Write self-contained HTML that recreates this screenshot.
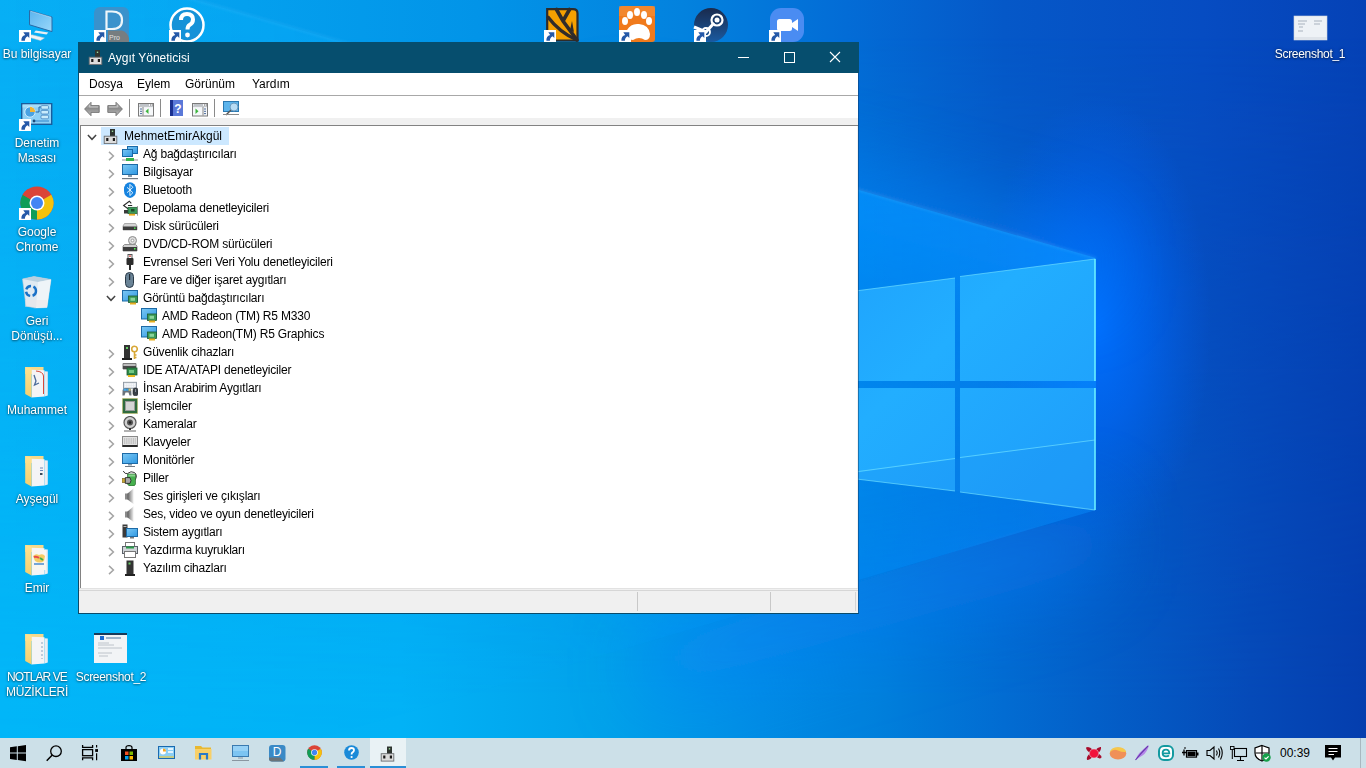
<!DOCTYPE html>
<html><head><meta charset="utf-8">
<style>
*{margin:0;padding:0;box-sizing:border-box}
html,body{width:1366px;height:768px;overflow:hidden}
body{position:relative;font-family:"Liberation Sans",sans-serif;font-size:12px;background:#0468cf}
#wall{position:absolute;left:0;top:0;width:1366px;height:738px;
 background:linear-gradient(80deg,#02b6f7 0px,#03a6ee 260px,#0398e8 470px,#037fdc 700px,#0468cf 880px,#0558c8 1000px,#0540b4 1300px)}
#wsvg{position:absolute;left:0;top:0}
.a{position:absolute}
svg.a{overflow:visible}
.di{position:absolute;color:#fff;font-size:12px;line-height:15px;text-align:center;white-space:nowrap;text-shadow:0 0 3px rgba(0,0,0,.5),0 1px 2px rgba(0,0,0,.4);transform:translateZ(0)}
.r{position:absolute;height:18px;line-height:18px;white-space:nowrap;color:#000;letter-spacing:-0.2px;transform:translateZ(0)}
.ch{position:absolute}
#task{position:absolute;left:0;top:738px;width:1366px;height:30px;background:#cce0e8}
</style></head>
<body>
<div id="wall"></div>
<svg id="wsvg" width="1366" height="738" viewBox="0 0 1366 738">
 <defs>
  <linearGradient id="btop" x1="0" y1="0" x2="1366" y2="0" gradientUnits="userSpaceOnUse">
   <stop offset="0" stop-color="#06aaf2"/><stop offset=".18" stop-color="#04a0ee"/><stop offset=".35" stop-color="#0294e8"/>
   <stop offset=".5" stop-color="#0382de"/><stop offset=".62" stop-color="#036cd6"/><stop offset=".735" stop-color="#0558c8"/>
   <stop offset=".88" stop-color="#064cc2"/><stop offset="1" stop-color="#0542b6"/>
  </linearGradient>
  <linearGradient id="bbot" x1="0" y1="0" x2="1366" y2="0" gradientUnits="userSpaceOnUse">
   <stop offset="0" stop-color="#02b6f8"/><stop offset=".294" stop-color="#02b2f6"/><stop offset=".442" stop-color="#02a2ea"/>
   <stop offset=".558" stop-color="#028ce4"/><stop offset=".64" stop-color="#0080dc"/><stop offset=".735" stop-color="#026cd2"/>
   <stop offset=".916" stop-color="#054ab8"/><stop offset="1" stop-color="#053eae"/>
  </linearGradient>
  <linearGradient id="vmask" x1="0" y1="0" x2="0" y2="738" gradientUnits="userSpaceOnUse">
   <stop offset="0.05" stop-color="#fff" stop-opacity="0"/><stop offset="0.95" stop-color="#fff" stop-opacity="1"/>
  </linearGradient>
  <mask id="vm"><rect x="0" y="0" width="1366" height="738" fill="url(#vmask)"/></mask>
  <linearGradient id="beam" x1="0" y1="0" x2="1096" y2="0" gradientUnits="userSpaceOnUse">
   <stop offset="0" stop-color="#0cc0ff" stop-opacity=".25"/>
   <stop offset=".5" stop-color="#08a8ff" stop-opacity=".35"/>
   <stop offset=".78" stop-color="#0094ff" stop-opacity=".9"/>
   <stop offset="1" stop-color="#0890ff" stop-opacity="1"/>
  </linearGradient>
  <linearGradient id="beamv" x1="0" y1="0" x2="0" y2="1">
   <stop offset="0" stop-color="#fff" stop-opacity="1"/><stop offset=".55" stop-color="#fff" stop-opacity=".55"/><stop offset="1" stop-color="#fff" stop-opacity=".0"/>
  </linearGradient>
  <mask id="bm"><polygon points="0,-56 1096,258 1096,510 0,832" fill="url(#beamv)"/></mask>
  <radialGradient id="glow" cx="1096" cy="325" r="115" gradientTransform="translate(1096 325) scale(1 2.0) translate(-1096 -325)" gradientUnits="userSpaceOnUse">
   <stop offset="0" stop-color="#0070ff" stop-opacity=".97"/>
   <stop offset=".45" stop-color="#0068fa" stop-opacity=".6"/>
   <stop offset="1" stop-color="#0060f0" stop-opacity="0"/>
  </radialGradient>
  <linearGradient id="pane" x1="858" y1="260" x2="1096" y2="510" gradientUnits="userSpaceOnUse">
   <stop offset="0" stop-color="#1fa4fd"/>
   <stop offset=".35" stop-color="#22aeff"/>
   <stop offset="1" stop-color="#1e9cfa"/>
  </linearGradient>
  <filter id="blur40" x="-50%" y="-50%" width="200%" height="200%"><feGaussianBlur stdDeviation="40"/></filter>
  <filter id="blur2" x="-10%" y="-10%" width="120%" height="120%"><feGaussianBlur stdDeviation="1.5"/></filter>
 </defs>
 <rect x="0" y="0" width="1366" height="738" fill="url(#btop)"/>
 <rect x="0" y="0" width="1366" height="738" fill="url(#bbot)" mask="url(#vm)"/>
 <rect x="0" y="0" width="1366" height="738" fill="url(#glow)"/>
 <polygon points="600,110 1096,240 1096,300 600,170" fill="#0a88ff" opacity=".6" filter="url(#blur40)"/>
 <polygon points="650,640 1100,500 1100,570 650,700" fill="#0a80ff" opacity=".5" filter="url(#blur40)"/>
 <rect x="0" y="-60" width="1100" height="900" fill="url(#beam)" mask="url(#bm)"/>
 <polyline points="0,-56 1096,258" fill="none" stroke="#50c0ff" stroke-opacity=".35" stroke-width="1.5" filter="url(#blur2)"/>
 <g fill="url(#pane)">
  <polygon points="840,293 955,278 955,381 840,381"/>
  <polygon points="960,276.5 1095,259 1095,381 960,381"/>
  <polygon points="840,388 955,388 955,491 840,477"/>
  <polygon points="960,388 1095,388 1095,510 960,492"/>
 </g>
 <polygon points="840,475 1095,440 1095,510 960,492 955,491 840,477" fill="#1a88f0" opacity=".2"/>
 <g fill="none" stroke="#6ef0ff" stroke-opacity=".95" stroke-width="1.6">
  <polyline points="1095,259 1095,381"/>
  <polyline points="1095,388 1095,510"/>
 </g>
 <g fill="none" stroke="#7ae8ff" stroke-opacity=".6" stroke-width="1.2">
  <polyline points="840,293 955,278"/><polyline points="960,276.5 1095,259"/>
  <polyline points="840,477 955,491"/><polyline points="960,492 1095,510"/>
  <polyline points="840,474 955,458.5"/><polyline points="960,457.5 1095,440"/>
 </g>
</svg>
<svg width="0" height="0" style="position:absolute">
<defs>
 <symbol id="sc" viewBox="0 0 12 12"><rect x="0" y="0" width="12" height="12" fill="#fff"/><path d="M2.4 10.8 C2.2 7.4 3.4 5.6 6.2 4.9 L4.3 2.2 H10.3 V7.9 L8.6 6.3 C6.9 7.1 5.9 8.4 5.9 10.8 Z" fill="#2458a8"/></symbol>
 <linearGradient id="fold" x1="0" y1="0" x2="0" y2="1"><stop offset="0" stop-color="#fde292"/><stop offset="1" stop-color="#f4cf6e"/></linearGradient>
 <symbol id="folder" viewBox="0 0 32 32"><path d="M3.2 1 H21.5 V8 H3.2 Z" fill="#f6d98a"/><path d="M9.5 3.8 L22.5 4.3 V30.5 L9.5 31.6 Z" fill="#f4f4f6"/><path d="M22.5 5.2 L25.8 5.6 V29.6 L22.5 30.4 Z" fill="#e8ecf2"/><path d="M3.2 1 L9.5 2.6 V31.6 L3.2 28 Z" fill="url(#fold)"/></symbol>
</defs></svg>
<!-- Bu bilgisayar -->
<svg class="a" style="left:20px;top:8px" width="36" height="34"><defs><linearGradient id="bbs" x1="0" y1="0" x2="1" y2="1"><stop offset="0" stop-color="#5ab4ee"/><stop offset="1" stop-color="#9ad8fa"/></linearGradient></defs><path d="M9.5 2.5 L32 9 V23.6 L9.5 16.8 Z" fill="url(#bbs)" stroke="#2a6aa6" stroke-width="1"/><path d="M10.5 3.2 L31 9.2" stroke="#d8f0ff" stroke-width=".8" opacity=".7"/><path d="M15.8 22.6 L28.3 24.6 L26.5 26.4 L14 24.4 Z" fill="#e8eef2"/><path d="M11.6 26.7 L24.4 29.9 L20.5 32.5 L9 29.3 Z" fill="#eef2f4" stroke="#c4ccd2" stroke-width=".5"/></svg>
<svg class="a" style="left:19px;top:30px" width="12" height="12"><use href="#sc"/></svg>
<div class="di" style="left:-1px;top:47px;width:76px">Bu bilgisayar</div>
<!-- D Pro -->
<svg class="a" style="left:94px;top:7px" width="36" height="36"><rect x="0" y="0" width="35" height="35" rx="6" fill="#3a92cc"/><path d="M14 23.5 H28 Q33 25 35 31 V35 H14 Z" fill="#777d80"/><path d="M12.5 4.5 H18 Q28 4.5 28 13.2 Q28 22 18 22 H12.5 Z" fill="none" stroke="#eef6fa" stroke-width="2.2"/><text x="15" y="33" font-family="Liberation Sans" font-size="7" fill="#e0e0e0">Pro</text></svg>
<svg class="a" style="left:94px;top:30px" width="12" height="12"><use href="#sc"/></svg>
<!-- help ? -->
<svg class="a" style="left:169px;top:7px" width="36" height="36"><circle cx="18" cy="18" r="16.5" fill="#1692d8" stroke="#fff" stroke-width="2.5"/><path d="M12 13 Q12 7 18 7 Q24 7 24 12.5 Q24 16 20.5 18 Q18.5 19.2 18.5 22.5" fill="none" stroke="#fff" stroke-width="4"/><circle cx="18.5" cy="28" r="2.4" fill="#fff"/></svg>
<svg class="a" style="left:169px;top:30px" width="12" height="12"><use href="#sc"/></svg>
<!-- orange tree -->
<svg class="a" style="left:546px;top:8px" width="33" height="34"><path d="M1.2 1.2 H27 Q31.5 1.2 31.5 5.5 V32.5 H1.2 Z" fill="#f5a000" stroke="#2e2c2a" stroke-width="2.2"/><path d="M31 32 L17 13 L10.5 1.5 M17 13 L23.5 1.5" fill="none" stroke="#302c2a" stroke-width="3.6" stroke-linecap="round"/><path d="M31 32 Q14 25 1.5 8.5" fill="none" stroke="#302c2a" stroke-width="3.4"/><path d="M24 22 L26 13 L28 24" fill="#302c2a"/><path d="M12 23 L30 32 H12 Z" fill="#302c2a" opacity=".0"/></svg>
<svg class="a" style="left:544px;top:30px" width="12" height="12"><use href="#sc"/></svg>
<!-- paw -->
<svg class="a" style="left:619px;top:6px" width="36" height="36"><rect x="0" y="0" width="36" height="36" rx="3" fill="#f07a1c"/><rect x="0" y="0" width="36" height="10" fill="#f59a4a" opacity=".4"/><ellipse cx="6" cy="15" rx="3" ry="4" fill="#fff"/><ellipse cx="11" cy="9" rx="3" ry="4" fill="#fff"/><ellipse cx="18" cy="6" rx="3" ry="4" fill="#fff"/><ellipse cx="25" cy="9" rx="3" ry="4" fill="#fff"/><ellipse cx="30" cy="15" rx="3" ry="4" fill="#fff"/><path d="M8 24 Q12 17 20 18 Q30 19 31 28 Q31 34 26 34 Q20 30 14 34 Q7 34 8 24 Z" fill="#fff"/></svg>
<svg class="a" style="left:619px;top:30px" width="12" height="12"><use href="#sc"/></svg>
<!-- steam -->
<svg class="a" style="left:694px;top:8px" width="35" height="34"><defs><linearGradient id="stg" x1="0" y1="0" x2="0" y2="1"><stop offset="0" stop-color="#1a2a4c"/><stop offset="1" stop-color="#1a5aa0"/></linearGradient></defs><circle cx="17" cy="17" r="17" fill="url(#stg)"/><circle cx="23" cy="12" r="5.5" fill="none" stroke="#fff" stroke-width="2.2"/><circle cx="23" cy="12" r="2.5" fill="#fff"/><path d="M0 19 L12 24 L20 15" fill="none" stroke="#fff" stroke-width="3"/><circle cx="12" cy="24" r="4" fill="none" stroke="#fff" stroke-width="1.8"/></svg>
<svg class="a" style="left:694px;top:30px" width="12" height="12"><use href="#sc"/></svg>
<!-- zoom -->
<svg class="a" style="left:770px;top:8px" width="34" height="34"><rect x="0" y="0" width="34" height="34" rx="11" fill="#4a8cf2"/><rect x="7" y="11" width="15" height="12" rx="2.5" fill="#fff"/><path d="M22 15 L28 11 V23 L22 19 Z" fill="#fff"/></svg>
<svg class="a" style="left:769px;top:30px" width="12" height="12"><use href="#sc"/></svg>
<!-- Screenshot_1 -->
<svg class="a" style="left:1294px;top:16px" width="34" height="25"><rect x="0" y="0" width="33" height="24" fill="#eef2f6"/><rect x="0" y="0" width="33" height="24" fill="none" stroke="#ccd4dc" stroke-width=".6"/><path d="M4 5 H13 M4 8 H11 M5 11 H9 M20 5 H28 M20 8 H26 M4 15 H9" stroke="#8a9aa8" stroke-width=".7"/><rect x="0" y="21" width="33" height="3" fill="#dfe4ea"/></svg>
<div class="di" style="left:1272px;top:47px;width:76px;letter-spacing:-0.3px">Screenshot_1</div>
<!-- Denetim Masasi -->
<svg class="a" style="left:21px;top:103px" width="32" height="23"><rect x="0.7" y="0.7" width="30" height="20.6" fill="#8ed0f6" stroke="#1a5c9c" stroke-width="1.4"/><rect x="1.5" y="1.5" width="28.5" height="3" fill="#b4e2fa" opacity=".7"/><circle cx="9" cy="9" r="5.2" fill="#4aa2e2" stroke="#d8f2ff" stroke-width=".9"/><path d="M9 9 V3.8 A5.2 5.2 0 0 1 14.2 9 Z" fill="#f2b534"/><path d="M14.5 9 H18 V4 H20" fill="none" stroke="#1a5c9c" stroke-width=".9"/><rect x="20" y="2.6" width="7.5" height="3.6" rx="1" fill="#c8ecfc" stroke="#3a7ab8" stroke-width=".7"/><rect x="20" y="7.4" width="7.5" height="3.6" rx="1" fill="#c8ecfc" stroke="#3a7ab8" stroke-width=".7"/><rect x="20" y="12.2" width="7.5" height="3.6" rx="1" fill="#c8ecfc" stroke="#3a7ab8" stroke-width=".7"/><path d="M12 18 H28" stroke="#4a9ad8" stroke-width="1.4"/><circle cx="13" cy="18" r="1.4" fill="#1a4a7a"/></svg>
<svg class="a" style="left:19px;top:119px" width="12" height="12"><use href="#sc"/></svg>
<div class="di" style="left:-1px;top:136px;width:76px">Denetim<br>Masası</div>
<!-- Chrome -->
<svg class="a" style="left:20px;top:186px" width="34" height="34" viewBox="0 0 34 34"><circle cx="17" cy="17" r="16.5" fill="#db4437"/><path d="M17 17 L31.3 8.75 A16.5 16.5 0 0 1 17 33.5 Z" fill="#f4c20d"/><path d="M17 17 L17 33.5 A16.5 16.5 0 0 1 2.7 8.75 Z" fill="#0f9d58"/><path d="M17 17 L2.7 8.75 A16.5 16.5 0 0 1 8 3 Z" fill="#db4437"/><circle cx="17" cy="17" r="7.5" fill="#fff"/><circle cx="17" cy="17" r="6" fill="#4285f4"/></svg>
<svg class="a" style="left:19px;top:208px" width="12" height="12"><use href="#sc"/></svg>
<div class="di" style="left:-1px;top:225px;width:76px">Google<br>Chrome</div>
<!-- Recycle bin -->
<svg class="a" style="left:22px;top:276px" width="30" height="33"><path d="M0.5 3 L12 0.5 L29 3.5 L25 31.5 L13 32 L4 30 Z" fill="#dfeaf2" stroke="#b8c8d4" stroke-width=".6"/><path d="M0.5 3 L12 0.5 L29 3.5 L16 6 Z" fill="#b8d0e0"/><path d="M16 6 L29 3.5 L25 31.5 L14 32 Z" fill="#eef4f8"/><circle cx="9" cy="15" r="5" fill="none" stroke="#1a72c8" stroke-width="2.4" stroke-dasharray="6 2.5"/><rect x="3" y="24" width="22" height="7" fill="#f0e4e4" opacity=".5"/></svg>
<div class="di" style="left:-1px;top:314px;width:76px">Geri<br>Dönüşü...</div>
<!-- folders -->
<svg class="a" style="left:22px;top:366px" width="32" height="32"><use href="#folder"/><path d="M12 9 L14 15 L12.5 19 L17 17" fill="none" stroke="#4a6a9a" stroke-width="1.3"/><path d="M14 5 Q21 5.5 21.5 10 V28" fill="none" stroke="#d84a3a" stroke-width="1"/></svg>
<div class="di" style="left:-1px;top:403px;width:76px">Muhammet</div>
<svg class="a" style="left:22px;top:455px" width="32" height="32"><use href="#folder"/><path d="M18 13 H21 M18 15.5 H21" stroke="#6a88b8" stroke-width="1"/><rect x="18" y="18" width="2.5" height="2" fill="#3a4a5a"/></svg>
<div class="di" style="left:-1px;top:492px;width:76px">Ayşegül</div>
<svg class="a" style="left:22px;top:544px" width="32" height="32"><use href="#folder"/><rect x="10" y="6" width="14" height="20" fill="#f8f6f0"/><path d="M11 12 Q14 9 17 11 Q21 9 23 12 L22 17 Q18 20 13 17 Z" fill="#f2c040" opacity=".8"/><path d="M12 13 Q15 12 17 14" stroke="#e84a4a" stroke-width="2" fill="none"/><path d="M18 14 L21 16" stroke="#3ab04a" stroke-width="2"/><path d="M12 20 H22" stroke="#4a8ad0" stroke-width="1.5"/></svg>
<div class="di" style="left:-1px;top:581px;width:76px">Emir</div>
<svg class="a" style="left:22px;top:633px" width="32" height="32"><use href="#folder"/><path d="M20 9 V26" stroke="#9ab0c8" stroke-width="1.2" stroke-dasharray="2 2"/></svg>
<div class="di" style="left:-1px;top:670px;width:76px"><span style="letter-spacing:-0.9px">NOTLAR VE</span><br><span style="letter-spacing:-0.2px">MÜZİKLERİ</span></div>
<!-- Screenshot_2 -->
<svg class="a" style="left:94px;top:633px" width="34" height="30"><rect x="0" y="0" width="33" height="30" fill="#f2f4f6"/><rect x="0" y="0" width="33" height="2" fill="#1a3a58"/><rect x="6" y="3" width="4" height="4" fill="#1a6ad0"/><path d="M12 5 H27" stroke="#6a8ab0" stroke-width="1.2"/><path d="M4 10 H15 M4 12 H20 M4 15 H28 M4 20 H18 M5 23 H14" stroke="#b0b8c0" stroke-width=".8"/></svg>
<div class="di" style="left:73px;top:670px;width:76px;letter-spacing:-0.3px">Screenshot_2</div>
<svg width="0" height="0" style="position:absolute">
<defs>
 <linearGradient id="gmon" x1="0" y1="0" x2="1" y2="1"><stop offset="0" stop-color="#7cc8f4"/><stop offset="1" stop-color="#2f98e2"/></linearGradient>
 <linearGradient id="garr" x1="0" y1="0" x2="0" y2="1"><stop offset="0" stop-color="#d0d0d0"/><stop offset=".45" stop-color="#8a8a8a"/><stop offset="1" stop-color="#c0c0c0"/></linearGradient>
 <symbol id="i-dm" viewBox="0 0 16 16"><rect x="7" y="1" width="5" height="7.5" fill="#2e3430"/><rect x="8.8" y="2.6" width="1.4" height="1.4" fill="#9ad89a"/><rect x="1.2" y="8.2" width="12.6" height="7.4" fill="#dcdcdc" stroke="#6a6e72" stroke-width=".9"/><rect x="3.2" y="10" width="2.2" height="3" fill="#1a1a1a"/><rect x="9.8" y="10" width="2.2" height="3" fill="#1a1a1a"/></symbol>
 <symbol id="i-net" viewBox="0 0 16 16"><rect x="5.5" y="0.5" width="10" height="7" fill="url(#gmon)" stroke="#1a6aa8"/><rect x="0.5" y="3.5" width="10" height="7" fill="url(#gmon)" stroke="#1a6aa8"/><rect x="0" y="13" width="16" height="2" fill="#c8c8c8"/><rect x="4" y="12" width="8" height="3" fill="#36b44a"/></symbol>
 <symbol id="i-pc" viewBox="0 0 16 16"><rect x="0.5" y="0.5" width="15" height="10" fill="url(#gmon)" stroke="#1d6aa6"/><rect x="6" y="11" width="4" height="2" fill="#8a9aa8"/><rect x="0" y="14" width="16" height="1.2" fill="#707a84"/></symbol>
 <symbol id="i-bt" viewBox="0 0 16 16"><rect x="2" y="0.3" width="12" height="15.6" rx="6" ry="7" fill="#1683e0"/><path d="M5 5.3 L10.9 10.7 L7.9 13.6 V2.3 L10.9 5.3 L5 10.7" fill="none" stroke="#e8f8ff" stroke-width=".95"/></symbol>
 <symbol id="i-sto" viewBox="0 0 16 16"><path d="M9.3 3.3 L7.3 1.2 L1.6 5.5 L7.3 9.8 L9.3 7.7 M6 5.5 H10.2" fill="none" stroke="#2a2a2a" stroke-width="1.1"/><rect x="2" y="10" width="4.5" height="3.5" fill="#3a3a3a"/><rect x="6" y="7.3" width="9.3" height="6.4" fill="#3a9a5a" stroke="#1e5a32" stroke-width=".7"/><rect x="9" y="9" width="3.5" height="2.5" fill="#1e4a2a"/><rect x="7" y="13.8" width="6" height="1.8" fill="#e8a820"/><rect x="15.2" y="6" width=".9" height="9.7" fill="#8a8a8a"/></symbol>
 <symbol id="i-disk" viewBox="0 0 16 16"><path d="M2.5 5.5 H13.5 L15 8 V12 H1 V8 Z" fill="#d4d4d4" stroke="#9a9a9a" stroke-width=".8"/><rect x="1" y="8.5" width="14" height="3.5" fill="#3e3e3e"/><rect x="12" y="9.5" width="1.5" height="1.3" fill="#5f5"/></symbol>
 <symbol id="i-dvd" viewBox="0 0 16 16"><circle cx="10.5" cy="4.5" r="4" fill="#dcdcdc" stroke="#8a8a8a"/><circle cx="10.5" cy="4.5" r="1.3" fill="#fff" stroke="#777" stroke-width=".6"/><path d="M2.5 8.5 H13.5 L15 10 V15 H1 V10 Z" fill="#cfcfcf" stroke="#909090"/><rect x="1" y="11" width="14" height="4" fill="#3e3e3e"/><rect x="12" y="12" width="1.5" height="1.5" fill="#5f5"/></symbol>
 <symbol id="i-usb" viewBox="0 0 16 16"><rect x="6" y="0.5" width="4" height="4" fill="#fff" stroke="#555"/><rect x="7" y="1.5" width="2" height="1.2" fill="#c33"/><rect x="4.5" y="4" width="7" height="7" rx="1" fill="#2c2c2c"/><rect x="7" y="11" width="2" height="5" fill="#2c2c2c"/></symbol>
 <symbol id="i-mouse" viewBox="0 0 16 16"><rect x="3.5" y="0.5" width="8" height="15" rx="4" fill="#6a8396" stroke="#2a3a48"/><rect x="7" y="2" width="1.2" height="6" fill="#1e2a34"/></symbol>
 <symbol id="i-disp" viewBox="0 0 16 16"><rect x="0.5" y="0.5" width="15" height="10.5" fill="url(#gmon)" stroke="#1d6aa6"/><rect x="6.5" y="6" width="9" height="6.5" fill="#3a9a58" stroke="#1e5a32" stroke-width=".8"/><rect x="8.5" y="7.8" width="4.5" height="3" fill="#8ad49a"/><rect x="8" y="12.5" width="6" height="2" fill="#e8b020"/></symbol>
 <symbol id="i-sec" viewBox="0 0 16 16"><rect x="2" y="1" width="6" height="13" fill="#333"/><rect x="4" y="3" width="2" height="2" fill="#6c6"/><rect x="0" y="14" width="10" height="2" fill="#222"/><circle cx="12.5" cy="5" r="2.8" fill="none" stroke="#d8a838" stroke-width="1.6"/><path d="M12.5 8 V15 M12.5 11 H14.5 M12.5 13.5 H14.5" stroke="#d8a838" stroke-width="1.6"/></symbol>
 <symbol id="i-ide" viewBox="0 0 16 16"><path d="M1 1.5 H14 V7 H1 Z" fill="#bdbdbd" stroke="#7a7a7a"/><rect x="1" y="4" width="13" height="3" fill="#4a4a4a"/><rect x="5" y="6" width="10" height="7" fill="#2f8a4a" stroke="#1c5a2e" stroke-width=".8"/><rect x="7" y="8" width="5" height="3" fill="#73c884"/><rect x="6" y="13" width="7" height="2" fill="#e6b820"/></symbol>
 <symbol id="i-hid" viewBox="0 0 16 16"><rect x="1.5" y="2.3" width="13" height="6" fill="#e4e8ee" stroke="#8c96a0" stroke-width=".9"/><path d="M3 4.2 H13 M3 6.2 H13" stroke="#fff" stroke-width="1" stroke-dasharray="1.4 .8"/><path d="M0.6 10 Q1 8 3.5 8 H7 Q9 8 9.2 10 L9.5 15.5 H7.5 L6.5 12.5 H3.5 L2.5 15.5 H0.4 Z" fill="#6a727a"/><rect x="1.5" y="8.6" width="2.5" height="2.2" fill="#4aa8e8"/><rect x="4.2" y="8.6" width="2.3" height="2.2" fill="#38a0e0"/><rect x="6.6" y="8.6" width="2" height="2.2" fill="#c8c070"/><rect x="11" y="8" width="5" height="7.8" rx="2.2" fill="#3a4048" stroke="#1a1e22" stroke-width=".6"/><path d="M13.5 9 V12" stroke="#9aa4ae" stroke-width=".8"/></symbol>
 <symbol id="i-cpu" viewBox="0 0 16 16"><rect x="0.5" y="0.5" width="15" height="15" fill="#2f6a3e" stroke="#c8c060" stroke-dasharray="1 1"/><rect x="3.5" y="3.5" width="9" height="9" fill="#d4d4d4" stroke="#9a9a9a"/></symbol>
 <symbol id="i-cam" viewBox="0 0 16 16"><circle cx="8" cy="6.5" r="6" fill="#cfcfcf" stroke="#555" stroke-width="1.2"/><circle cx="8" cy="6.5" r="3" fill="#555"/><circle cx="8" cy="6.5" r="1.3" fill="#222"/><rect x="7" y="12" width="2" height="2" fill="#333"/><rect x="2" y="14.5" width="12" height="1" fill="#666"/></symbol>
 <symbol id="i-kbd" viewBox="0 0 16 16"><rect x="0.5" y="2.5" width="15" height="10" fill="#e2e2e2" stroke="#8a8a8a"/><path d="M2 5 H14 M2 7 H14 M2 9 H14" stroke="#9a9a9a" stroke-width=".9" stroke-dasharray="1 .8"/><rect x="0.5" y="11" width="15" height="2" fill="#2a2a2a"/></symbol>
 <symbol id="i-mon" viewBox="0 0 16 16"><rect x="0.5" y="1.5" width="15" height="10" fill="url(#gmon)" stroke="#1d6aa6"/><rect x="6" y="12" width="4" height="1.5" fill="#8a9aa8"/><rect x="3" y="14" width="10" height="1" fill="#707a84"/></symbol>
 <symbol id="i-bat" viewBox="0 0 16 16"><path d="M1.2 1 Q3 4.5 5.5 3.5 Q9 0.5 12.5 2.5 Q16 5.5 13 10" fill="none" stroke="#3a3a3a" stroke-width="1"/><path d="M5.5 4 H13.5 V14 Q13.5 16 9.5 16 Q6 16 5.5 14 Z" fill="#46b04e" stroke="#1e5a22" stroke-width=".6"/><rect x="6.5" y="4.5" width="6.5" height="2" fill="#b8e8b8" opacity=".6"/><rect x="0" y="8.3" width="3.3" height="4.4" fill="#c8a838" stroke="#5a4a18" stroke-width=".5"/><path d="M3.3 7.6 H8 Q10 10.5 8 13.4 H3.3 Z" fill="#a8a8a8" stroke="#1a1a1a" stroke-width=".8"/></symbol>
 <linearGradient id="gspk" x1="0" y1="0" x2="1" y2="0"><stop offset="0" stop-color="#5a5a5a"/><stop offset=".6" stop-color="#b8b8b8"/><stop offset="1" stop-color="#e8e8e8"/></linearGradient><symbol id="i-spk" viewBox="0 0 16 16"><rect x="3" y="5.5" width="3" height="6" fill="#8a8a8a"/><path d="M5.5 5.5 L11.5 0.5 V16 L5.5 11.5 Z" fill="url(#gspk)"/><path d="M11.5 0.5 V16" stroke="#f4f4f4" stroke-width="1.2"/></symbol>
 <symbol id="i-sys" viewBox="0 0 16 16"><rect x="0.5" y="0.5" width="5" height="13" fill="#3a3a3a"/><rect x="1.5" y="2" width="3" height="1" fill="#bbb"/><rect x="4.5" y="4.5" width="11" height="8" fill="url(#gmon)" stroke="#1d6aa6"/><rect x="8" y="13" width="4" height="1.5" fill="#777"/></symbol>
 <symbol id="i-prn" viewBox="0 0 16 16"><rect x="3.5" y="0.5" width="9" height="4" fill="#fff" stroke="#777"/><rect x="0.5" y="4.5" width="15" height="7" fill="#cfd4d8" stroke="#5a6068"/><rect x="4" y="4.5" width="8" height="2" fill="#2a9a4a"/><rect x="2.5" y="9.5" width="11" height="6" fill="#fff" stroke="#777"/></symbol>
 <symbol id="i-sw" viewBox="0 0 16 16"><rect x="4.5" y="0.5" width="7" height="14" fill="#333"/><rect x="6.5" y="2.5" width="2" height="2" fill="#6c6"/><rect x="3" y="14" width="10" height="2" fill="#222"/></symbol>
 <symbol id="chr" viewBox="0 0 7 10"><path d="M1 0.9 L5.4 5 L1 9.1" fill="none" stroke="#a4a4a4" stroke-width="1.5"/></symbol>
 <symbol id="chd" viewBox="0 0 10 7"><path d="M0.9 1 L5 5.3 L9.1 1" fill="none" stroke="#444" stroke-width="1.5"/></symbol>
</defs></svg>

<!-- window frame -->
<div class="a" style="left:78px;top:42px;width:781px;height:572px;background:#f0f0f0;background-clip:padding-box;border:1px solid #0c4a68;border-right-color:rgba(10,50,90,.45)"></div><div class="a" style="left:855px;top:592px;width:1px;height:19px;background:#d4d4d4"></div>
<div class="a" style="left:78px;top:42px;width:781px;height:31px;background:#064e6e"></div>
<svg class="a" style="left:88px;top:49px" width="14" height="16"><use href="#i-dm" width="16" height="16"/></svg>
<div class="a" style="left:108px;top:51px;color:#fff;line-height:15px;transform:translateZ(0)">Aygıt Yöneticisi</div>
<svg class="a" style="left:737px;top:51px" width="14" height="12"><path d="M1 6.5 H12" stroke="#fff" stroke-width="1"/></svg>
<svg class="a" style="left:783px;top:51px" width="12" height="12"><rect x="1.5" y="1.5" width="10" height="10" fill="none" stroke="#fff" stroke-width="1"/></svg>
<svg class="a" style="left:829px;top:51px" width="12" height="12"><path d="M1 1 L11 11 M11 1 L1 11" stroke="#fff" stroke-width="1.1"/></svg>
<!-- menu -->
<div class="a" style="left:79px;top:73px;width:779px;height:22px;background:#fff"></div>
<div class="a" style="left:79px;top:95px;width:779px;height:1px;background:#a8a8a8"></div>
<div class="a" style="left:89px;top:77px;line-height:15px;transform:translateZ(0)">Dosya</div>
<div class="a" style="left:137px;top:77px;line-height:15px;transform:translateZ(0)">Eylem</div>
<div class="a" style="left:185px;top:77px;line-height:15px;transform:translateZ(0)">Görünüm</div>
<div class="a" style="left:252px;top:77px;line-height:15px;transform:translateZ(0)">Yardım</div>
<!-- toolbar -->
<div class="a" style="left:79px;top:96px;width:779px;height:22px;background:#fff"></div>
<svg class="a" style="left:84px;top:101px" width="16" height="16"><path d="M0.6 8 L7 1.3 V4.6 H15.2 V11.4 H7 V14.7 Z" fill="url(#garr)" stroke="#707070" stroke-width=".9"/><path d="M2 8 L6 3.8 V5.6 H14 V6.4 H5.2 V4.8 Z" fill="#e8e8e8" opacity=".6"/></svg>
<svg class="a" style="left:107px;top:101px" width="16" height="16"><path d="M15.4 8 L9 1.3 V4.6 H0.8 V11.4 H9 V14.7 Z" fill="url(#garr)" stroke="#707070" stroke-width=".9"/><path d="M14 8 L10 3.8 V5.6 H2 V6.4 H10.8 V4.8 Z" fill="#e8e8e8" opacity=".6"/></svg>
<div class="a" style="left:129px;top:99px;width:1px;height:18px;background:#8a8a8a"></div>
<svg class="a" style="left:138px;top:103px" width="16" height="14"><rect x="0.5" y="0.5" width="15" height="12.5" fill="#f6f8fa" stroke="#7a7a7a"/><path d="M1.5 2 H11" stroke="#9aa0a6" stroke-width="1.2"/><rect x="12" y="1.4" width="1.2" height="1.2" fill="#7a7a7a"/><rect x="13.8" y="1.4" width="1.2" height="1.2" fill="#7a7a7a"/><path d="M1 3.6 H15" stroke="#b0b4b8" stroke-width=".8"/><path d="M5 4 V12.5" stroke="#7a7a7a" stroke-width=".9"/><path d="M2 6 H4 M2 8.3 H4 M2 10.6 H4" stroke="#4a6a9a" stroke-width="1"/><path d="M10.5 5.5 L7.5 8.2 L10.5 11 Z" fill="#3cb43c"/></svg>
<div class="a" style="left:160px;top:99px;width:1px;height:18px;background:#8a8a8a"></div>
<svg class="a" style="left:170px;top:100px" width="14" height="16"><rect x="0" y="0" width="13" height="16" fill="#3552c0"/><rect x="0" y="0" width="3" height="16" fill="#1a3090"/><rect x="3" y="0" width="10" height="16" fill="#5a78d8"/><text x="8" y="12.5" fill="#fff" font-size="12" font-weight="bold" text-anchor="middle" font-family="Liberation Sans">?</text></svg>
<svg class="a" style="left:192px;top:103px" width="16" height="14"><rect x="0.5" y="0.5" width="15" height="12.5" fill="#f6f8fa" stroke="#7a7a7a"/><path d="M1.5 2 H11" stroke="#9aa0a6" stroke-width="1.2"/><rect x="12" y="1.4" width="1.2" height="1.2" fill="#7a7a7a"/><rect x="13.8" y="1.4" width="1.2" height="1.2" fill="#7a7a7a"/><path d="M1 3.6 H15" stroke="#b0b4b8" stroke-width=".8"/><path d="M11 4 V12.5" stroke="#7a7a7a" stroke-width=".9"/><path d="M12 6 H14 M12 8.3 H14 M12 10.6 H14" stroke="#4a6a9a" stroke-width="1"/><path d="M3.5 5.5 L6.5 8.2 L3.5 11 Z" fill="#3cb43c"/></svg>
<div class="a" style="left:214px;top:99px;width:1px;height:18px;background:#8a8a8a"></div>
<svg class="a" style="left:223px;top:101px" width="16" height="15"><rect x="0.5" y="0.5" width="15" height="10" fill="#5cb4ec" stroke="#2a78b0"/><circle cx="11" cy="6" r="4" fill="#b8dcf4" stroke="#6a9ac0"/><path d="M8 9 L3 14" stroke="#555" stroke-width="1.5"/><rect x="0" y="13" width="16" height="1" fill="#8a8a8a"/></svg>
<!-- tree -->
<div class="a" style="left:80px;top:125px;width:778px;height:1px;background:#828282"></div>
<div class="a" style="left:80px;top:125px;width:1px;height:463px;background:#828282"></div>
<div class="a" style="left:81px;top:126px;width:776px;height:462px;background:#fff"></div>
<div class="a" style="left:79px;top:588px;width:779px;height:1px;background:#e2e2e2"></div>
<div class="a" style="left:79px;top:590px;width:779px;height:1px;background:#d6d6d6"></div>
<div class="a" style="left:79px;top:612px;width:779px;height:1px;background:#e6f6fa"></div>
<div class="a" style="left:637px;top:592px;width:1px;height:19px;background:#c8c8c8"></div>
<div class="a" style="left:770px;top:592px;width:1px;height:19px;background:#c8c8c8"></div>
<div class="a" style="left:101px;top:127px;width:128px;height:18px;background:#cce8ff"></div>
<svg class="a" style="left:87px;top:134px" width="10" height="7"><use href="#chd"/></svg>
<svg class="a" style="left:103px;top:128px" width="16" height="16"><use href="#i-dm"/></svg>
<div class="r" style="left:124px;top:127px;letter-spacing:0">MehmetEmirAkgül</div>
<svg class="a" style="left:108px;top:151px" width="7" height="10"><use href="#chr"/></svg>
<svg class="a" style="left:122px;top:146px" width="16" height="16"><use href="#i-net"/></svg>
<div class="r" style="left:143px;top:145px">Ağ bağdaştırıcıları</div>
<svg class="a" style="left:108px;top:169px" width="7" height="10"><use href="#chr"/></svg>
<svg class="a" style="left:122px;top:164px" width="16" height="16"><use href="#i-pc"/></svg>
<div class="r" style="left:143px;top:163px">Bilgisayar</div>
<svg class="a" style="left:108px;top:187px" width="7" height="10"><use href="#chr"/></svg>
<svg class="a" style="left:122px;top:182px" width="16" height="16"><use href="#i-bt"/></svg>
<div class="r" style="left:143px;top:181px">Bluetooth</div>
<svg class="a" style="left:108px;top:205px" width="7" height="10"><use href="#chr"/></svg>
<svg class="a" style="left:122px;top:200px" width="16" height="16"><use href="#i-sto"/></svg>
<div class="r" style="left:143px;top:199px">Depolama denetleyicileri</div>
<svg class="a" style="left:108px;top:223px" width="7" height="10"><use href="#chr"/></svg>
<svg class="a" style="left:122px;top:218px" width="16" height="16"><use href="#i-disk"/></svg>
<div class="r" style="left:143px;top:217px">Disk sürücüleri</div>
<svg class="a" style="left:108px;top:241px" width="7" height="10"><use href="#chr"/></svg>
<svg class="a" style="left:122px;top:236px" width="16" height="16"><use href="#i-dvd"/></svg>
<div class="r" style="left:143px;top:235px">DVD/CD-ROM sürücüleri</div>
<svg class="a" style="left:108px;top:259px" width="7" height="10"><use href="#chr"/></svg>
<svg class="a" style="left:122px;top:254px" width="16" height="16"><use href="#i-usb"/></svg>
<div class="r" style="left:143px;top:253px">Evrensel Seri Veri Yolu denetleyicileri</div>
<svg class="a" style="left:108px;top:277px" width="7" height="10"><use href="#chr"/></svg>
<svg class="a" style="left:122px;top:272px" width="16" height="16"><use href="#i-mouse"/></svg>
<div class="r" style="left:143px;top:271px">Fare ve diğer işaret aygıtları</div>
<svg class="a" style="left:106px;top:295px" width="10" height="7"><use href="#chd"/></svg>
<svg class="a" style="left:122px;top:290px" width="16" height="16"><use href="#i-disp"/></svg>
<div class="r" style="left:143px;top:289px">Görüntü bağdaştırıcıları</div>
<svg class="a" style="left:141px;top:308px" width="16" height="16"><use href="#i-disp"/></svg>
<div class="r" style="left:162px;top:307px">AMD Radeon (TM) R5 M330</div>
<svg class="a" style="left:141px;top:326px" width="16" height="16"><use href="#i-disp"/></svg>
<div class="r" style="left:162px;top:325px">AMD Radeon(TM) R5 Graphics</div>
<svg class="a" style="left:108px;top:349px" width="7" height="10"><use href="#chr"/></svg>
<svg class="a" style="left:122px;top:344px" width="16" height="16"><use href="#i-sec"/></svg>
<div class="r" style="left:143px;top:343px">Güvenlik cihazları</div>
<svg class="a" style="left:108px;top:367px" width="7" height="10"><use href="#chr"/></svg>
<svg class="a" style="left:122px;top:362px" width="16" height="16"><use href="#i-ide"/></svg>
<div class="r" style="left:143px;top:361px">IDE ATA/ATAPI denetleyiciler</div>
<svg class="a" style="left:108px;top:385px" width="7" height="10"><use href="#chr"/></svg>
<svg class="a" style="left:122px;top:380px" width="16" height="16"><use href="#i-hid"/></svg>
<div class="r" style="left:143px;top:379px">İnsan Arabirim Aygıtları</div>
<svg class="a" style="left:108px;top:403px" width="7" height="10"><use href="#chr"/></svg>
<svg class="a" style="left:122px;top:398px" width="16" height="16"><use href="#i-cpu"/></svg>
<div class="r" style="left:143px;top:397px">İşlemciler</div>
<svg class="a" style="left:108px;top:421px" width="7" height="10"><use href="#chr"/></svg>
<svg class="a" style="left:122px;top:416px" width="16" height="16"><use href="#i-cam"/></svg>
<div class="r" style="left:143px;top:415px">Kameralar</div>
<svg class="a" style="left:108px;top:439px" width="7" height="10"><use href="#chr"/></svg>
<svg class="a" style="left:122px;top:434px" width="16" height="16"><use href="#i-kbd"/></svg>
<div class="r" style="left:143px;top:433px">Klavyeler</div>
<svg class="a" style="left:108px;top:457px" width="7" height="10"><use href="#chr"/></svg>
<svg class="a" style="left:122px;top:452px" width="16" height="16"><use href="#i-mon"/></svg>
<div class="r" style="left:143px;top:451px">Monitörler</div>
<svg class="a" style="left:108px;top:475px" width="7" height="10"><use href="#chr"/></svg>
<svg class="a" style="left:122px;top:470px" width="16" height="16"><use href="#i-bat"/></svg>
<div class="r" style="left:143px;top:469px">Piller</div>
<svg class="a" style="left:108px;top:493px" width="7" height="10"><use href="#chr"/></svg>
<svg class="a" style="left:122px;top:488px" width="16" height="16"><use href="#i-spk"/></svg>
<div class="r" style="left:143px;top:487px">Ses girişleri ve çıkışları</div>
<svg class="a" style="left:108px;top:511px" width="7" height="10"><use href="#chr"/></svg>
<svg class="a" style="left:122px;top:506px" width="16" height="16"><use href="#i-spk"/></svg>
<div class="r" style="left:143px;top:505px">Ses, video ve oyun denetleyicileri</div>
<svg class="a" style="left:108px;top:529px" width="7" height="10"><use href="#chr"/></svg>
<svg class="a" style="left:122px;top:524px" width="16" height="16"><use href="#i-sys"/></svg>
<div class="r" style="left:143px;top:523px">Sistem aygıtları</div>
<svg class="a" style="left:108px;top:547px" width="7" height="10"><use href="#chr"/></svg>
<svg class="a" style="left:122px;top:542px" width="16" height="16"><use href="#i-prn"/></svg>
<div class="r" style="left:143px;top:541px">Yazdırma kuyrukları</div>
<svg class="a" style="left:108px;top:565px" width="7" height="10"><use href="#chr"/></svg>
<svg class="a" style="left:122px;top:560px" width="16" height="16"><use href="#i-sw"/></svg>
<div class="r" style="left:143px;top:559px">Yazılım cihazları</div>
<div id="task"></div>
<div class="a" style="left:370px;top:738px;width:36px;height:30px;background:#e9f2f5"></div>
<div class="a" style="left:300px;top:766px;width:28px;height:2px;background:#2a8fd6"></div>
<div class="a" style="left:337px;top:766px;width:28px;height:2px;background:#2a8fd6"></div>
<div class="a" style="left:370px;top:766px;width:36px;height:2px;background:#2a8fd6"></div>
<!-- start -->
<svg class="a" style="left:10px;top:745px" width="17" height="17"><path d="M0 2.3 L6.8 1.3 V7.6 H0 Z M7.8 1.2 L16 0 V7.6 H7.8 Z M0 8.6 H6.8 V14.9 L0 13.9 Z M7.8 8.6 H16 V16.2 L7.8 15 Z" fill="#000"/></svg>
<!-- search -->
<svg class="a" style="left:46px;top:745px" width="17" height="17"><circle cx="10" cy="6.2" r="5.3" fill="none" stroke="#000" stroke-width="1.3"/><path d="M6.3 10 L0.7 15.8" stroke="#000" stroke-width="1.5"/></svg>
<!-- task view -->
<svg class="a" style="left:81px;top:744px" width="18" height="18"><path d="M1.6 1 V3.3 H11.6 V1 M1.6 16.2 V13.8 H11.6 V16.2" fill="none" stroke="#000" stroke-width="1.3"/><rect x="1.6" y="5.6" width="10" height="6.1" fill="none" stroke="#000" stroke-width="1.3"/><path d="M15.6 1 V3.6 M15.6 9.2 V16.2" stroke="#000" stroke-width="1.2"/><rect x="14.2" y="5.1" width="2.8" height="2.8" fill="#000"/></svg>
<!-- store -->
<svg class="a" style="left:121px;top:745px" width="16" height="16"><path d="M5 4 V2.5 Q5 0.6 8 0.6 Q11 0.6 11 2.5 V4" fill="none" stroke="#000" stroke-width="1.2"/><rect x="0" y="4" width="16" height="12" fill="#000"/><rect x="4" y="6.5" width="3.5" height="3.5" fill="#f25022"/><rect x="8.5" y="6.5" width="3.5" height="3.5" fill="#7fba00"/><rect x="4" y="11" width="3.5" height="3.5" fill="#00a4ef"/><rect x="8.5" y="11" width="3.5" height="3.5" fill="#ffb900"/></svg>
<!-- control panel -->
<svg class="a" style="left:158px;top:746px" width="17" height="14"><rect x="0.5" y="0.5" width="16" height="12" fill="#8ccff5" stroke="#1a6ab0"/><circle cx="5" cy="5.5" r="3" fill="#fff"/><path d="M5 5.5 V2.5 A3 3 0 0 1 8 5.5 Z" fill="#f5a623"/><path d="M10 3 H15 M10 6 H15" stroke="#fff" stroke-width="1.5"/><rect x="1" y="10" width="15" height="2" fill="#e8c840" opacity=".6"/></svg>
<!-- explorer -->
<svg class="a" style="left:195px;top:745px" width="17" height="15"><path d="M0 1 H6 L7.5 2.5 H16 V14 H0 Z" fill="#e8b830"/><rect x="0" y="4" width="16.5" height="10.5" fill="#f8d068"/><path d="M5 14.5 V9 H12 V14.5" fill="none" stroke="#2a7ac8" stroke-width="2.2"/></svg>
<!-- monitor -->
<svg class="a" style="left:232px;top:745px" width="17" height="17"><rect x="0.5" y="0.5" width="16" height="11" fill="#7cc4f2" stroke="#3a7ab0"/><rect x="1" y="1" width="15" height="5" fill="#a8daf8" opacity=".6"/><rect x="6" y="12.5" width="5" height="1" fill="#8a9aa8"/><rect x="0" y="15" width="17" height="1" fill="#8a96a0"/></svg>
<!-- D pro -->
<svg class="a" style="left:269px;top:745px" width="17" height="17"><rect x="0" y="0" width="16.5" height="16.5" rx="3" fill="#3a8ac6"/><path d="M0 12.5 H11 L15 16.5 H3 Q0 16.5 0 13.5 Z" fill="#6a747a"/><text x="8" y="11" font-family="Liberation Sans" font-size="12" fill="#fff" text-anchor="middle">D</text></svg>
<!-- chrome -->
<svg class="a" style="left:307px;top:745px" width="15" height="15" viewBox="0 0 34 34"><circle cx="17" cy="17" r="16.5" fill="#db4437"/><path d="M17 17 L31.3 8.75 A16.5 16.5 0 0 1 17 33.5 Z" fill="#f4c20d"/><path d="M17 17 L17 33.5 A16.5 16.5 0 0 1 2.7 8.75 Z" fill="#0f9d58"/><circle cx="17" cy="17" r="7.5" fill="#fff"/><circle cx="17" cy="17" r="6" fill="#4285f4"/></svg>
<!-- help -->
<svg class="a" style="left:344px;top:745px" width="15" height="15"><circle cx="7.5" cy="7.5" r="7.3" fill="#1a8ad8"/><path d="M5 5.5 Q5 3 7.5 3 Q10 3 10 5.3 Q10 6.8 8.3 7.6 Q7.6 8 7.6 9.5" fill="none" stroke="#fff" stroke-width="1.8"/><circle cx="7.6" cy="12" r="1.1" fill="#fff"/></svg>
<!-- device manager -->
<svg class="a" style="left:380px;top:745px" width="15" height="17"><use href="#i-dm" width="16" height="17"/></svg>
<!-- tray -->
<svg class="a" style="left:1085px;top:745px" width="18" height="16"><path d="M1 2.5 Q4 0.5 8 5 L5 8 Q1 5 1 2.5 Z M16 2 Q16.5 5 13 8.5 L10 5.5 Q13 1.5 16 2 Z M2 15 Q1 11.5 5 8.5 L8 11 Q5.5 15 2 15 Z M16.5 12.5 Q14.5 15 10.5 11 L13.5 8.5 Q16.5 10.5 16.5 12.5 Z" fill="#a80c2c"/><circle cx="9" cy="8.5" r="4.6" fill="#f2103a" stroke="#e8d0dc" stroke-width=".6"/></svg>
<svg class="a" style="left:1109px;top:746px" width="18" height="14"><ellipse cx="9" cy="7.5" rx="8.3" ry="6" fill="#f09058"/><path d="M0.8 6.5 Q4 2.5 9 4.5 Q13 6.5 17.2 6 Q16 1.2 9 1.2 Q2 1.2 0.8 6.5 Z" fill="#f6c84a"/></svg>
<svg class="a" style="left:1134px;top:744px" width="16" height="17"><path d="M1.5 16 Q3 9 15 1 Q13.5 8 8.5 11.5 Q5 13.5 1.5 16 Z" fill="#b488e8"/><path d="M1.5 16 Q7 9 14 2" fill="none" stroke="#6a38b0" stroke-width="1.1"/></svg>
<svg class="a" style="left:1158px;top:745px" width="16" height="16"><rect x="1" y="1" width="14" height="14" rx="5" fill="#fff" stroke="#139aa0" stroke-width="2"/><path d="M4.6 8.3 H11.3 Q11.3 4.6 8 4.6 Q4.6 4.6 4.6 8 Q4.6 11.4 8 11.4 Q10 11.4 11 10.3" fill="none" stroke="#139aa0" stroke-width="1.8"/></svg>
<svg class="a" style="left:1182px;top:747px" width="17" height="12"><path d="M0 5.5 H4 M2 2.5 V8.5" stroke="#000" stroke-width="1.3"/><rect x="4.5" y="3.6" width="10" height="6.5" fill="none" stroke="#000" stroke-width="1.2"/><rect x="5.5" y="4.6" width="8" height="4.5" fill="#000"/><rect x="15" y="5.5" width="1.5" height="3" fill="#000"/><path d="M3 2 V0" stroke="#000"/></svg>
<svg class="a" style="left:1206px;top:745px" width="17" height="16"><path d="M1 5.5 H4 L8 2 V14 L4 10.5 H1 Z" fill="none" stroke="#000" stroke-width="1.1"/><path d="M10.5 5.5 Q12 8 10.5 10.5 M12.5 3.5 Q15 8 12.5 12.5 M14.5 1.5 Q18 8 14.5 14.5" fill="none" stroke="#000" stroke-width="1.1"/></svg>
<svg class="a" style="left:1230px;top:746px" width="17" height="16"><rect x="4.5" y="2.5" width="12" height="8" fill="none" stroke="#000" stroke-width="1.1"/><path d="M10.5 11 V14 M7 14.5 H14" stroke="#000" stroke-width="1.1"/><rect x="0.5" y="0.5" width="3.5" height="3" fill="none" stroke="#000" stroke-width=".9"/><path d="M2.3 3.5 V13" stroke="#000" stroke-width="1"/></svg>
<svg class="a" style="left:1254px;top:745px" width="17" height="17"><path d="M8 0.5 L15 3 V8 Q15 13.5 8 16 Q1 13.5 1 8 V3 Z" fill="#fff" stroke="#000" stroke-width="1.2"/><path d="M8 1 V15.5 M1.5 8 H14.5" stroke="#000" stroke-width="1.2"/><circle cx="12.5" cy="12.5" r="4.2" fill="#16a04a"/><path d="M10.5 12.6 L12 14 L14.6 11.3" fill="none" stroke="#fff" stroke-width="1.2"/></svg>
<div class="a" style="left:1280px;top:746px;font-size:12px;line-height:14px;color:#000">00:39</div>
<svg class="a" style="left:1325px;top:745px" width="17" height="17"><path d="M0 0 H16 V12.5 H10 L8 15.5 L6 12.5 H0 Z" fill="#000"/><path d="M3.5 3.5 H12.5 M3.5 6.5 H12.5 M3.5 9.5 H9" stroke="#fff" stroke-width="1.1"/></svg>
<div class="a" style="left:1360px;top:738px;width:1px;height:30px;background:#a8b8c0"></div>

</body></html>
